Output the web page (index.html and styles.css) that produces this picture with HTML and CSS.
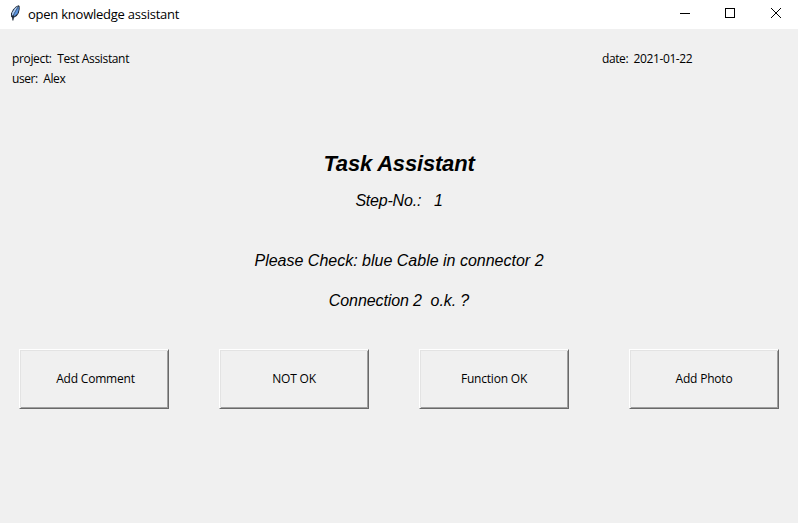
FILE: index.html
```html
<!DOCTYPE html>
<html lang="en">
<head>
<meta charset="utf-8">
<title>open knowledge assistant</title>
<link rel="stylesheet" href="styles.css">
</head>
<body>
<header class="titlebar">
  <svg class="feather" width="12" height="16" viewBox="0 0 12 16">
    <path d="M9.5.3 10.6 1 10.7 4 9.8 8 7.8 11 4.8 12.8 4.4 15.4 3.4 15.4 3.2 12.8 2 11.5 2 8.5 4 4.5 7 1.5Z" fill="#1d2633"/>
    <path d="M9.8 1.2 9.7 5 8.5 8.6 5.4 11.6 4.2 10 6.8 5Z" fill="#5b94df"/>
    <path d="M9.2 1.1 6 3.2 3.2 7.4 2.8 11 4.4 9.6 6.6 5.6Z" fill="#b0cef5"/>
    <path d="M8.5 3 5.2 8.5 4 14" fill="none" stroke="#24364d" stroke-width=".5"/>
  </svg>
  <h1 class="window-title">open knowledge assistant</h1>
  <div class="controls">
    <svg width="46" height="29" viewBox="0 0 46 29" shape-rendering="crispEdges"><path d="M20 13.5h10"/></svg>
    <svg width="45" height="29" viewBox="0 0 45 29" shape-rendering="crispEdges"><path d="M19.5 8.5h9v9h-9z"/></svg>
    <svg width="47" height="29" viewBox="0 0 47 29"><path d="M20 8 30 18M30 8 20 18"/></svg>
  </div>
</header>
<main class="client">
  <section class="info">
    <div>
      <p class="project">project:&nbsp; Test Assistant</p>
      <p>user:&nbsp; Alex</p>
    </div>
    <p class="date">date:&nbsp; 2021-01-22</p>
  </section>
  <section class="task">
    <h2>Task Assistant</h2>
    <p class="step">Step-No.:&nbsp;&nbsp; 1</p>
    <p class="instruction">Please Check: blue Cable in connector 2</p>
    <p class="question">Connection 2&nbsp; o.k. ?</p>
  </section>
  <section class="actions">
    <button class="comment">Add Comment</button>
    <button>NOT OK</button>
    <button>Function OK</button>
    <button class="photo">Add Photo</button>
  </section>
</main>
</body>
</html>
```
FILE: styles.css
```css
* { box-sizing: border-box; }
body, h1, h2, p { margin: 0; }
body {
  height: 523px;
  overflow: hidden;
  background: #f0f0f0;
  color: #000;
  font: 12px/20px "Open Sans", "Noto Sans", sans-serif;
}
.titlebar {
  display: flex;
  height: 29px;
  padding-left: 9px;
  background: #fff;
}
.feather { margin-top: 5px; }
.window-title {
  margin-left: 7px;
  font-size: 13px;
  font-weight: 400;
  line-height: 29px;
  letter-spacing: -0.24px;
  white-space: nowrap;
}
.controls { display: flex; margin-left: auto; }
.controls svg { fill: none; stroke: #000; stroke-width: 1; }
.client { padding-top: 20px; }
.info {
  display: flex;
  justify-content: space-between;
  height: 100px;
  padding-left: 12px;
  letter-spacing: -0.4px;
  white-space: nowrap;
}
.project { letter-spacing: -0.35px; }
.date { width: 196px; }
.task {
  height: 200px;
  text-align: center;
  font: italic 16px/20px "Liberation Sans", Arial, sans-serif;
}
.task h2 { font-size: 22px; line-height: 30px; letter-spacing: -0.18px; }
.step { margin-top: 12px; letter-spacing: -0.2px; }
.instruction { margin-top: 40px; }
.question { margin-top: 20px; letter-spacing: -0.1px; }
.actions { display: flex; gap: 50px; padding-left: 19px; }
button {
  width: 150px;
  height: 60px;
  padding: 0 0 1px;
  border: 1px solid;
  border-color: #fff #696969 #696969 #fff;
  border-radius: 0;
  background: #f0f0f0;
  box-shadow: inset 1px 1px #e3e3e3, inset -1px -1px #a0a0a0;
  color: #000;
  font: inherit;
  letter-spacing: -0.2px;
}
.comment { padding-left: 3px; }
.photo { margin-left: 10px; }
```
